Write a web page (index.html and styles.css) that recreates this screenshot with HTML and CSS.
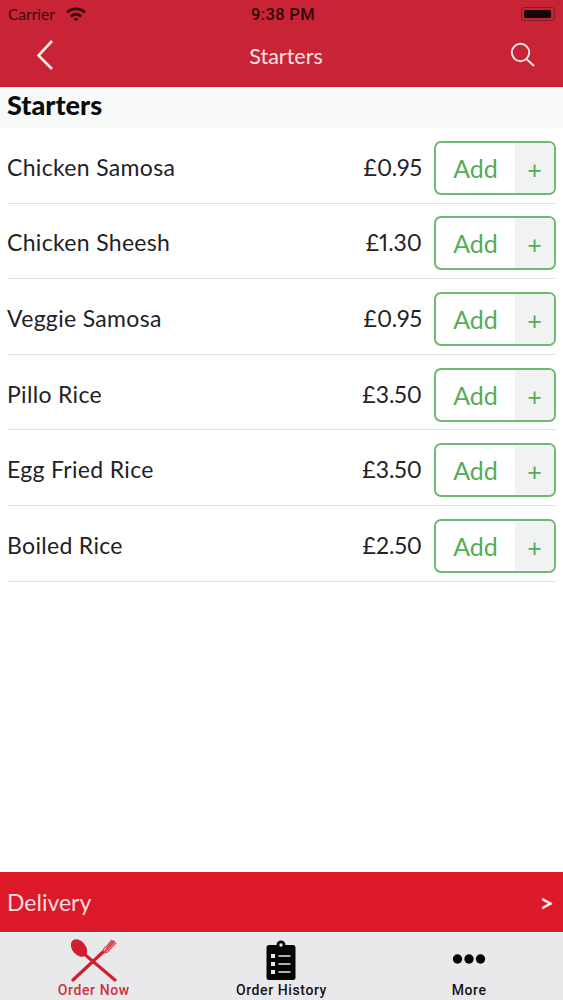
FILE: index.html
```html
<!DOCTYPE html>
<html lang="en">
<head>
<meta charset="utf-8">
<title>Starters</title>
<link rel="stylesheet" href="styles.css">
</head>
<body>
<div class="app">
  <header class="top">
    <div class="status">
      <div class="status-left">
        <span>Carrier</span>
        <svg class="wifi" viewBox="0 0 20 14"><path d="M0 4.600a14 14 0 0 1 20 0l-2 2.100a11.200 11.200 0 0 0-16 0z"/><path d="M3.800 8.400a8.800 8.800 0 0 1 12.400 0l-2 2.100a6 6 0 0 0-8.400 0z"/><path d="M7.500 11.900a3.600 3.600 0 0 1 5 0L10 14.400z"/></svg>
      </div>
      <span class="clock">9:38 PM</span>
      <div class="battery"><span class="battery-fill"></span></div>
    </div>
    <nav class="nav">
      <svg class="back" viewBox="0 0 18 32"><path d="M16 2 2.500 16.500 16 30"/></svg>
      <span class="nav-title">Starters</span>
      <svg class="search" viewBox="0 0 26 26"><circle cx="10.500" cy="10.500" r="8.700"/><path d="m16.500 17 7.500 7"/></svg>
    </nav>
  </header>

  <h1 class="section">Starters</h1>

  <main class="list">
    <div class="row"><span class="name">Chicken Samosa</span><span class="price">£0.95</span><div class="add"><span class="add-label">Add</span><span class="add-plus">+</span></div></div>
    <div class="row"><span class="name">Chicken Sheesh</span><span class="price">£1.30</span><div class="add"><span class="add-label">Add</span><span class="add-plus">+</span></div></div>
    <div class="row"><span class="name">Veggie Samosa</span><span class="price">£0.95</span><div class="add"><span class="add-label">Add</span><span class="add-plus">+</span></div></div>
    <div class="row"><span class="name">Pillo Rice</span><span class="price">£3.50</span><div class="add"><span class="add-label">Add</span><span class="add-plus">+</span></div></div>
    <div class="row"><span class="name">Egg Fried Rice</span><span class="price">£3.50</span><div class="add"><span class="add-label">Add</span><span class="add-plus">+</span></div></div>
    <div class="row"><span class="name">Boiled Rice</span><span class="price">£2.50</span><div class="add"><span class="add-label">Add</span><span class="add-plus">+</span></div></div>
  </main>

  <div class="delivery"><span>Delivery</span><span class="chev">&gt;</span></div>

  <footer class="tabs">
    <div class="tab tab-active">
      <svg class="tab-icon" viewBox="0 0 46 44">
        <ellipse cx="8" cy="10" rx="6.800" ry="9.800" transform="rotate(-40 8 10)" class="fill-red"/>
        <path d="M12 15 44 42" class="line-red"/>
        <path d="M32 14 2 42" class="line-red"/>
        <path d="M32 14c0-3 2-5 4-6l5-6M33 15c3 0 5-2 6-4l6-6M33 14l9.500-11.500M33.500 14.500l10.500-11M36 10l7-7.500" class="tines"/>
      </svg>
      <span class="tab-label">Order Now</span>
    </div>
    <div class="tab">
      <svg class="tab-icon" viewBox="0 0 46 44">
        <path d="M11 7h7.500a4.500 4.500 0 0 1 9 0H35a2.500 2.500 0 0 1 2.500 2.500v30a2.500 2.500 0 0 1-2.500 2.500H11a2.500 2.500 0 0 1-2.500-2.500v-30A2.500 2.500 0 0 1 11 7z"/>
        <circle cx="23" cy="7" r="1.700" class="fill-grey"/>
        <path d="M13 16h4v4h-4zM13 24h4v4h-4zM13 32h4v4h-4z" class="fill-grey"/>
        <path d="M20.500 17.300h12v1.400h-12zM20.500 25.300h12v1.400h-12zM20.500 33.300h12v1.400h-12z" class="fill-grey"/>
      </svg>
      <span class="tab-label">Order History</span>
    </div>
    <div class="tab">
      <svg class="tab-icon" viewBox="0 0 46 44"><circle cx="11.500" cy="21" r="4.700"/><circle cx="23" cy="21" r="4.700"/><circle cx="34.500" cy="21" r="4.700"/></svg>
      <span class="tab-label">More</span>
    </div>
  </footer>
</div>
</body>
</html>
```
FILE: styles.css
```css
* { box-sizing: border-box; }
html, body { margin: 0; padding: 0; }
body { font-family: Lato, "Open Sans", sans-serif; background: #fff; color: #1c1c1e; }
.app { width: 563px; height: 1000px; display: flex; flex-direction: column; overflow: hidden; }

.top { height: 87px; background: #c92436; flex: none; }
.status { height: 28px; padding: 0 8px 0 8px; display: flex; align-items: center; justify-content: space-between; position: relative; color: #3b0a10; font-size: 15.500px; }
.status-left { display: flex; align-items: center; gap: 11px; }
.wifi { width: 20px; height: 14px; fill: #3b0a10; margin-top: -1px; }
.clock { position: absolute; left: 251px; top: 5px; font-family: Roboto, sans-serif; font-weight: 500; font-size: 16.500px; letter-spacing: .35px; color: #2e060b; }
.battery { width: 34px; height: 14px; border: 1px solid #8a1a27; border-radius: 3px; padding: 2px 3px 2px 2px; }
.battery-fill { display: block; height: 100%; background: #12060a; border-radius: 1.500px; }

.nav { height: 59px; display: flex; align-items: center; justify-content: space-between; padding: 0 27px 6px 36px; position: relative; }
.back { width: 18px; height: 32px; fill: none; stroke: #fbe9ea; stroke-width: 2.600; }
.search { width: 26px; height: 26px; fill: none; stroke: #fbe9ea; stroke-width: 1.900; }
.nav-title { position: absolute; left: 9px; right: 0; top: 15px; text-align: center; color: #f9e3e4; font-size: 21.500px; }

.section { margin: 0; height: 41px; flex: none; background: #f8f9f9; padding: 1px 7px 0; font-size: 27px; line-height: 34px; font-weight: 900; color: #0b0c0e; }

.list { flex: 1; padding-left: 7px; padding-right: 7px; }
.row { height: 75.600px; padding-top: 5px; display: flex; align-items: center; border-bottom: 1px solid #e2e4e4; }
.name { flex: 1; font-size: 23px; letter-spacing: .32px; color: #222226; margin-bottom: 2px; }
.price { font-size: 23px; font-variant-numeric: proportional-nums; color: #222226; margin: 0 12px 2px 0; }
.add { width: 122px; height: 54px; border: 2px solid #6fb970; border-radius: 7px; display: flex; overflow: hidden; color: #55ab58; }
.add-label { flex: 1; font-size: 25px; line-height: 50px; text-align: center; }
.add-plus { width: 39px; background: #f1f3f3; text-align: center; font-size: 25px; line-height: 53px; }

.delivery { flex: none; height: 60px; margin-bottom: 1px; background: #dc1829; color: #fbdfe0; display: flex; align-items: center; justify-content: space-between; padding: 0 9px 0 7px; font-size: 23px; }
.chev { font-size: 25px; font-weight: 700; }

.tabs { flex: none; height: 67px; background: #e9e9eb; display: flex; }
.tab { position: relative; width: 187.660px; display: flex; flex-direction: column; align-items: center; padding-top: 5px; color: #141416; }
.tab-icon { width: 46px; height: 44px; fill: #050506; }
.tab-label { font-family: Roboto, sans-serif; font-weight: 500; font-size: 14px; line-height: 16px; letter-spacing: .6px; }
.tab-active { color: #c9323f; }
.fill-red { fill: #d11f30; }
.line-red { fill: none; stroke: #d11f30; stroke-width: 3.200; stroke-linecap: round; }
.tines { fill: none; stroke: #d9434f; stroke-width: 1.200; }
.fill-grey { fill: #e9e9eb; }
```
